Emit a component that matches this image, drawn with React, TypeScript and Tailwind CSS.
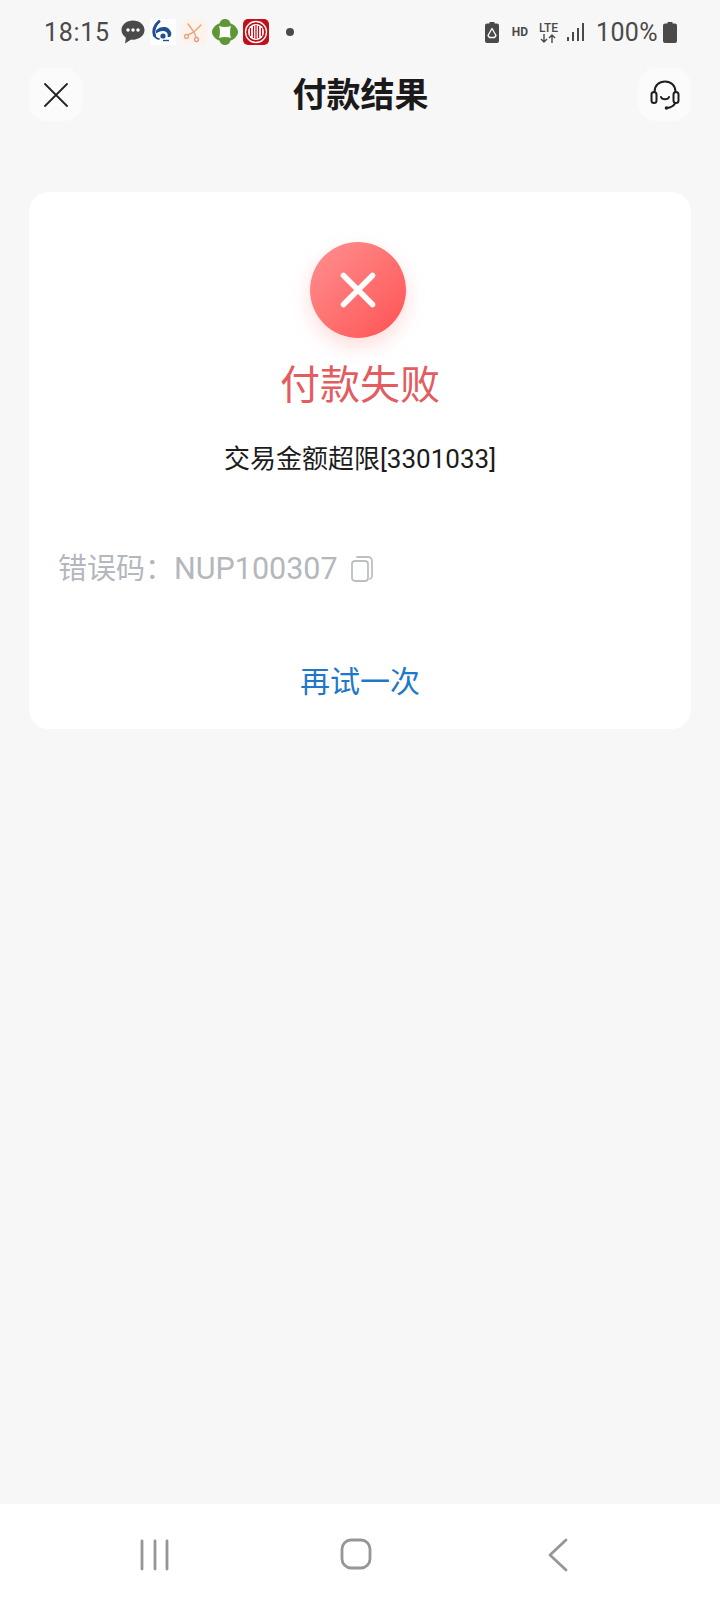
const sans = "font-['Roboto','Noto_Sans_CJK_SC',sans-serif]";

const ChatIcon = () => (
  <svg width="24" height="24" viewBox="0 0 25 25" className="ml-[11px]">
    <path d="M12.500 0.500C5.800 0.500 0.500 4.800 0.500 10.500c0 3.300 1.800 6.100 4.600 7.900L4.200 24.500l6.300-4.200c.7.1 1.300.2 2 .2 6.700 0 12-4.400 12-10S19.200 0.500 12.500 0.500z" fill="#4a4a4a" />
    <circle cx="7.300" cy="10.500" r="1.800" fill="#fff" />
    <circle cx="12.500" cy="10.500" r="1.800" fill="#fff" />
    <circle cx="17.700" cy="10.500" r="1.800" fill="#fff" />
  </svg>
);

const BankIcon = () => (
  <svg width="26" height="26" viewBox="0 0 26 26" className="ml-[5px] bg-white">
    <path d="M9 2.500C4.500 6.500 3 12 4.500 16.500" fill="none" stroke="#1d4f91" strokeWidth="3" strokeLinecap="round" />
    <path d="M6 11.500c3.500-4 10-4.500 13-1.500 2.500 2.500 3 5 1.500 7.500-1 .4-2 .5-3 .5 1-3-.5-5.500-4-6-2.500-.3-5 .5-7.500 2.500z" fill="#1d4f91" />
    <path d="M4.500 16.500c1 2.500 3 3.500 5 3.500" fill="none" stroke="#1d4f91" strokeWidth="2" />
    <circle cx="13" cy="17" r="2.600" fill="#1d4f91" />
    <path d="M13 21.500h6" stroke="#1d4f91" strokeWidth="1.400" />
  </svg>
);

const ScissorsIcon = () => (
  <svg width="26" height="26" viewBox="0 0 26 26" className="ml-[5px] rounded-md bg-[#fcf3ed]">
    <path d="M7 5l6 8 2 5M20 6l-7 7-6 3" fill="none" stroke="#e9a77f" strokeWidth="1.500" strokeLinecap="round" />
    <circle cx="15.500" cy="20.500" r="2" fill="none" stroke="#ea9a8c" strokeWidth="1.300" />
    <circle cx="5.500" cy="17.500" r="2" fill="none" stroke="#e9a77f" strokeWidth="1.300" />
  </svg>
);

const CoinIcon = () => (
  <svg width="26" height="26" viewBox="0 0 26 26" className="ml-[5px]">
    <path d="M13 0c3 0 5 2 5.500 4.500C21.500 5 26 9 26 13s-4.500 8-7.500 8.500C18 24 16 26 13 26s-5-2-5.500-4.500C4.500 21 0 17 0 13s4.500-8 7.500-8.500C8 2 10 0 13 0z" fill="#5f9636" />
    <path d="M7 7c3.500 1.300 8.500 1.300 12 0-1.300 3.500-1.300 8.500 0 12-3.500-1.300-8.500-1.300-12 0 1.300-3.500 1.300-8.500 0-12z" fill="#fff" />
  </svg>
);

const CiticIcon = () => (
  <svg width="26" height="26" viewBox="0 0 26 26" className="ml-[5px]">
    <rect width="26" height="26" rx="5" fill="#c0101c" />
    <circle cx="13" cy="13" r="10.500" fill="none" stroke="#fff" strokeWidth="1.300" />
    <circle cx="13" cy="13" r="8" fill="#fff" />
    <path d="M7.500 9v8M10.500 7v12M13 6v14M15.500 7v12M18.500 9v8" stroke="#c0101c" strokeWidth="1.200" />
  </svg>
);

const RecycleBattery = () => (
  <svg width="14" height="21" viewBox="0 0 14 21">
    <path d="M4.500 0h5v1.500H12a2 2 0 0 1 2 2V19a2 2 0 0 1-2 2H2a2 2 0 0 1-2-2V3.500a2 2 0 0 1 2-2h2.500z" fill="#4a4a4a" />
    <path d="M7 6.500l-4 7 1.500 2h5l1.500-2-4-7z" fill="none" stroke="#fff" strokeWidth="1.300" strokeLinejoin="round" />
  </svg>
);

const NetworkType = () => (
  <div className="ml-[10px] flex w-[21px] flex-col items-center text-[#4a4a4a]">
    <span className="text-[12px] font-medium leading-[12px]">LTE</span>
    <svg width="16" height="9" viewBox="0 0 16 9" fill="none" stroke="#4a4a4a" strokeWidth="1.400">
      <path d="M4 0v8M1 5l3 3 3-3M12 9V1M9 4l3-3 3 3" />
    </svg>
  </div>
);

const Signal = () => (
  <svg width="18" height="20" viewBox="0 0 18 20" fill="#4a4a4a" className="ml-[8px]">
    <rect x="0" y="15" width="2" height="4" />
    <rect x="5" y="10" width="2" height="9" />
    <rect x="10" y="6" width="2" height="13" />
    <rect x="15" y="1" width="2" height="18" />
  </svg>
);

const BatteryFull = () => (
  <svg width="14" height="21" viewBox="0 0 14 21" className="ml-[5px]">
    <path d="M4.500 0h5v1.500H12a2 2 0 0 1 2 2V19a2 2 0 0 1-2 2H2a2 2 0 0 1-2-2V3.500a2 2 0 0 1 2-2h2.500z" fill="#4a4a4a" />
  </svg>
);

const StatusBar = () => (
  <div className="flex h-[64px] items-center justify-between pl-[44px] pr-[43px] text-[#4a4a4a]">
    <div className="flex items-center">
      <span className="text-[25px] font-normal leading-none tracking-[0.7px]">18:15</span>
      <ChatIcon />
      <BankIcon />
      <ScissorsIcon />
      <CoinIcon />
      <CiticIcon />
      <span className="ml-[17px] h-[8px] w-[8px] rounded-full bg-[#4a4a4a]" />
    </div>
    <div className="flex items-center">
      <RecycleBattery />
      <span className="ml-[13px] text-[12px] font-bold leading-none">HD</span>
      <NetworkType />
      <Signal />
      <span className="ml-[11px] text-[25px] font-normal leading-none tracking-[0.4px]">100%</span>
      <BatteryFull />
    </div>
  </div>
);

const Header = () => (
  <div className="mt-[4px] flex items-center justify-between px-[29px]">
    <button className="flex h-[53px] w-[53px] items-center justify-center rounded-[18px] bg-[#fbfbfb]">
      <svg width="24" height="24" viewBox="0 0 24 24" fill="none" stroke="#222" strokeWidth="1.800" strokeLinecap="round">
        <path d="M1 1l22 22M23 1L1 23" />
      </svg>
    </button>
    <h1 className="h-[53px] pl-[1px] pt-[1px] text-[34px] font-bold leading-[53px] text-[#1a1a1a]">付款结果</h1>
    <button className="flex h-[53px] w-[53px] items-center justify-center rounded-[18px] bg-[#fbfbfb]">
      <svg width="30" height="30" viewBox="0 0 30 30" fill="none" stroke="#1f1f1f" strokeWidth="2" strokeLinecap="round">
        <path d="M4.500 12C4.500 5.500 9 1.500 15 1.500S25.500 5.500 25.500 12" />
        <rect x="1.500" y="12" width="5" height="11" rx="2.500" />
        <rect x="23.500" y="12" width="5" height="11" rx="2.500" />
        <path d="M11 17c1 3 7 3 8 0" />
        <path d="M25 23.500c-1.500 2.500-4 4-8 4.500" />
        <circle cx="16.500" cy="28" r="0.800" fill="#1f1f1f" />
      </svg>
    </button>
  </div>
);

const FailIcon = () => (
  <div className="-ml-[4px] flex h-[96px] w-[96px] items-center justify-center rounded-full bg-gradient-to-br from-[#ff8f90] to-[#ff4f52] shadow-[0_8px_20px_rgba(255,90,90,0.22)]">
    <svg width="36" height="36" viewBox="0 0 36 36" fill="none" stroke="#fff" strokeWidth="5.500" strokeLinecap="round">
      <path d="M3.500 3.500l29 29M32.500 3.500l-29 29" />
    </svg>
  </div>
);

const CopyIcon = () => (
  <svg width="22" height="26" viewBox="0 0 22 26" fill="none" stroke="#bcbfc4" strokeWidth="1.800" className="ml-[13px]">
    <rect x="1" y="5" width="16" height="20" rx="3" />
    <path d="M6 1h11a4 4 0 0 1 4 4v15c0 1.500-.8 2.500-2 3" strokeLinecap="round" />
  </svg>
);

const ResultCard = () => (
  <div className="mx-[29px] mt-[71px] flex h-[537px] flex-col items-center rounded-[20px] bg-white pt-[50px]">
    <FailIcon />
    <div className="mt-[22px] text-[40px] leading-[52px] text-[#e25c60]">付款失败</div>
    <div className="mt-[29px] text-[26px] leading-[36px] text-[#1c1c1c]">交易金额超限[3301033]</div>
    <div className="mt-[72px] flex w-full items-center pl-[29px] text-[29px] leading-[40px] text-[#b4b7bd]">
      错误码：<span className="text-[30.500px]">NUP100307</span>
      <CopyIcon />
    </div>
    <button className="mt-[73px] text-[30px] leading-[40px] text-[#1f78c8]">再试一次</button>
  </div>
);

const NavBar = () => (
  <div className="mt-auto flex h-[96px] items-start justify-between bg-white pl-[140px] pr-[152px] pt-[35px]">
    <svg width="30" height="32" viewBox="0 0 30 32" stroke="#969696" strokeWidth="2.800" strokeLinecap="round">
      <path d="M2 2v28M15 2v28M27 2v28" />
    </svg>
    <svg width="32" height="32" viewBox="0 0 32 32" fill="none" stroke="#969696" strokeWidth="2.800" className="-ml-[6px] -mt-[1px]">
      <rect x="2" y="2" width="28" height="28" rx="9" />
    </svg>
    <svg width="20" height="34" viewBox="0 0 20 34" fill="none" stroke="#969696" strokeWidth="2.800" strokeLinecap="round" strokeLinejoin="round" className="-mt-[1px]">
      <path d="M18 2L2 17l16 15" />
    </svg>
  </div>
);

export default function App() {
  return (
    <div className={`flex h-[1600px] w-[720px] flex-col overflow-hidden bg-[#f7f7f7] ${sans}`}>
      <StatusBar />
      <Header />
      <ResultCard />
      <NavBar />
    </div>
  );
}
